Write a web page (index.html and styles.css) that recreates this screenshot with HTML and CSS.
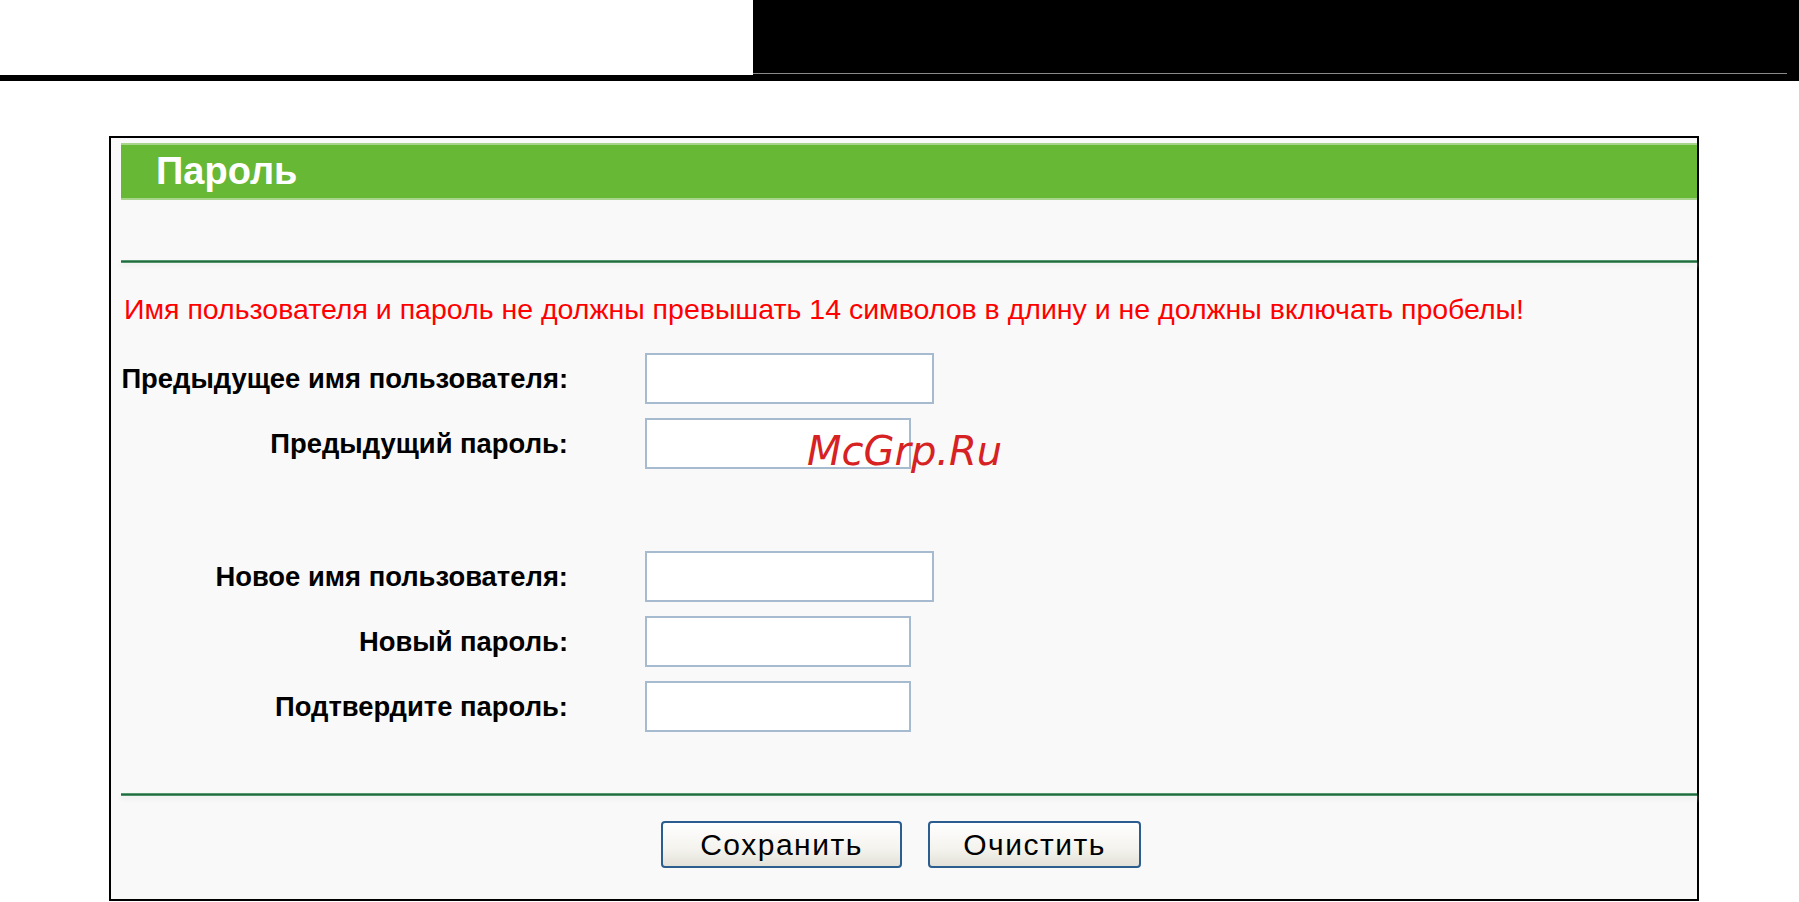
FILE: index.html
```html
<!DOCTYPE html>
<html>
<head>
    <title>Пароль</title>
    <link rel="stylesheet" href="styles.css">
</head>
<body>
    <div id="top">
        <div id="top-blank"></div>
        <div id="top-box"><div id="top-box-line"></div></div>
    </div>
    <div id="top-bar"></div>

    <div id="panel">
        <div class="title">Пароль</div>
        <div class="rule rule-top"></div>
        <p class="warn">Имя пользователя и пароль не должны превышать 14 символов в длину и не должны включать пробелы!</p>

        <div class="form">
            <label class="label">Предыдущее имя пользователя:</label>
            <input class="field wide" type="text">
            <label class="label">Предыдущий пароль:</label>
            <input class="field" type="password">
            <div class="empty"></div>
            <label class="label">Новое имя пользователя:</label>
            <input class="field wide" type="text">
            <label class="label">Новый пароль:</label>
            <input class="field" type="password">
            <label class="label">Подтвердите пароль:</label>
            <input class="field" type="password">
        </div>

        <div class="rule rule-bottom"></div>
        <div id="button-container">
            <button class="button save">Сохранить</button>
            <button class="button clear">Очистить</button>
        </div>
    </div>

    <div id="watermark">McGrp.Ru</div>
</body>
</html>
```

FILE: styles.css
```css
body {
    margin: 0;
    padding: 0;
    background-color: #fff;
    font-family: "Liberation Sans", Arial, sans-serif;
}

#top {
    display: flex;
    height: 75px;
}

#top-blank {
    width: 753px;
}

#top-box {
    flex: 1;
    background-color: #000;
    display: flex;
    align-items: flex-end;
}

#top-box-line {
    width: 100%;
    margin-right: 12px;
    height: 1px;
    margin-bottom: 1px;
    background-color: #8a8a8a;
}

#top-bar {
    height: 6px;
    background-color: #000;
}

#panel {
    box-sizing: border-box;
    width: 1590px;
    margin: 55px 0 0 109px;
    padding: 5px 0 31px 10px;
    border: 2px solid #000;
    background-color: #f9f9f9;
}

.title {
    box-sizing: border-box;
    height: 57px;
    padding-left: 35px;
    background-color: #67b834;
    border-top: 2px solid #a8d58c;
    border-bottom: 2px solid #a8d58c;
    color: #fff;
    font-size: 38px;
    font-weight: bold;
    line-height: 52px;
}

.rule {
    height: 3px;
    background: linear-gradient(#7fb895, #1f6a3e 40%, #1f6a3e 70%, #8fc2a2);
    box-shadow: 0 3px 4px #ececec;
}

.rule-top {
    margin-top: 60px;
}

.warn {
    margin: 30px 0 0 3px;
    color: #ff0000;
    font-size: 28.5px;
    line-height: 32px;
}

.form {
    display: grid;
    grid-template-columns: 447px 1fr;
    column-gap: 77px;
    row-gap: 14px;
    margin-top: 28px;
    align-items: center;
}

.label {
    text-align: right;
    font-size: 27.4px;
    font-weight: bold;
    color: #000;
}

.empty {
    grid-column: 1 / 3;
    height: 54px;
}

.field {
    box-sizing: border-box;
    width: 266px;
    height: 51px;
    border: 2px solid #a6bad0;
    background-color: #fff;
    margin: 0;
}

.field.wide {
    width: 289px;
}

.rule-bottom {
    margin-top: 61px;
}

#button-container {
    display: flex;
    justify-content: center;
    gap: 26px;
    margin-top: 25px;
    padding-right: 16px;
}

.button {
    box-sizing: border-box;
    height: 47px;
    border: 2px solid #2c5d8f;
    border-radius: 4px;
    background: linear-gradient(#ffffff, #f4f3ee 60%, #e3e1d8);
    color: #000;
    font-family: "Liberation Sans", Arial, sans-serif;
    font-size: 30px;
    letter-spacing: 1.5px;
    padding: 0;
}

.button.save {
    width: 241px;
}

.button.clear {
    width: 213px;
}

#watermark {
    position: absolute;
    left: 807px;
    top: 431px;
    font-family: "DejaVu Sans", sans-serif;
    font-style: oblique;
    font-size: 40px;
    line-height: 1;
    color: #d62222;
}
```
